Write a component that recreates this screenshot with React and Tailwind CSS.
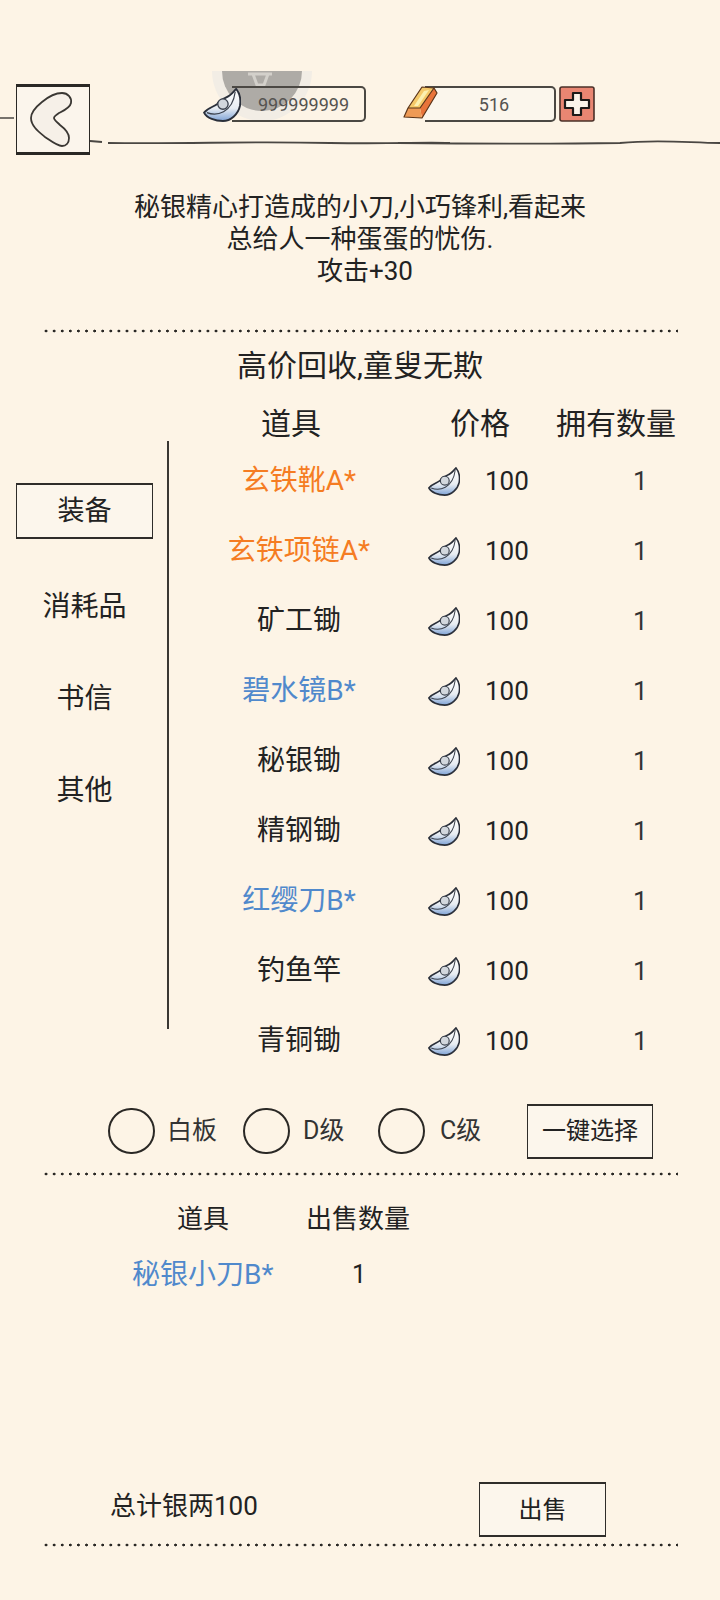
import React from "react";

const items = [
  { name: "玄铁靴A*", color: "text-[#f57c22]" },
  { name: "玄铁项链A*", color: "text-[#f57c22]" },
  { name: "矿工锄", color: "text-[#222222]" },
  { name: "碧水镜B*", color: "text-[#5089cc]" },
  { name: "秘银锄", color: "text-[#222222]" },
  { name: "精钢锄", color: "text-[#222222]" },
  { name: "红缨刀B*", color: "text-[#5089cc]" },
  { name: "钓鱼竿", color: "text-[#222222]" },
  { name: "青铜锄", color: "text-[#222222]" },
];

const tabs = ["装备", "消耗品", "书信", "其他"];
const grades = [
  { label: "白板", text: "w-[88px] pl-[12px]" },
  { label: "D级", text: "w-[88px] pl-[13px]" },
  { label: "C级", text: "w-[102px] pl-[15px]" },
];

// silver ingot used for the currency and price column
function SilverIcon({ className }) {
  return (
    <svg viewBox="0 0 40 36" className={className}>
      <defs>
        <linearGradient id="silver" x1="0" y1="0" x2="0" y2="1">
          <stop offset="0" stopColor="#ffffff" />
          <stop offset="0.6" stopColor="#e8edf3" />
          <stop offset="1" stopColor="#7fa3d6" />
        </linearGradient>
      </defs>
      <path d="M1 26 C5 21 11 20 15 17 C17 12 24 11 28 8 C31 6 33 3 35 1 C39 6 40 13 39 19 C37 28 29 35 21 35 C13 35 4 32 1 26 Z" fill="url(#silver)" stroke="#2a2f3a" strokeWidth="2" strokeLinejoin="round" />
      <circle cx="21" cy="17" r="5.5" fill="#d2d7dd" stroke="#3a404c" strokeWidth="1.4" />
      <path d="M4 26 C14 30 31 27 34 4" fill="none" stroke="#3a404c" strokeWidth="1.3" />
    </svg>
  );
}

function GoldIcon() {
  return (
    <svg viewBox="0 0 36 36" className="w-[36px] h-[36px] shrink-0">
      <path d="M32 2 L35 7 L20 32 L18 22 Z" fill="#e8743a" />
      <path d="M20 1 L32 2 L18 22 L6 22 Z" fill="#f5c96a" />
      <path d="M22 5 L27 4 L16 20 L12 20 Z" fill="#fbf0b0" />
      <path d="M6 22 L18 22 L20 32 L2 31 Z" fill="#ee9a55" />
      <path d="M20 1 L32 2 L35 7 L20 32 L2 31 L6 22 Z M6 22 H18 L32 2" fill="none" stroke="#5b3418" strokeWidth="1.2" strokeLinejoin="round" />
    </svg>
  );
}

function PlusIcon() {
  return (
    <svg viewBox="0 0 36 36" className="w-[36px] h-[36px] shrink-0 ml-[3px]">
      <rect x="1" y="1" width="34" height="34" rx="2" fill="#e98672" stroke="#4a3029" strokeWidth="1.6" />
      <path d="M14 7 H22 V14 H30 V22 H22 V29 H14 V22 H6 V14 H14 Z" fill="#fbf4ea" stroke="#1d1a18" strokeWidth="2.2" strokeLinejoin="round" />
    </svg>
  );
}

function BackButton() {
  return (
    <button className="w-[74px] h-[71px] shrink-0 bg-[#fbf5ec] border-x-[1.5px] border-y-[3px] border-[#2a2825] relative">
      <svg viewBox="0 0 74 71" className="absolute left-[-2px] top-[-3px] w-[74px] h-[71px]">
        <path d="M16 34 C16 28 22 22 27 18 C33 13 40 9 47 9 C53 9 57 14 56 19 C55 24 48 27 44 29 C41 31 39 33 39 34 C39 36 42 38 45 41 C49 44 54 48 54 54 C54 59 51 62 47 62 C42 62 36 57 30 53 C24 48 16 42 16 34 Z" fill="#f6f0e8" stroke="#3a3733" strokeWidth="1.8" />
      </svg>
    </button>
  );
}

function Dotted({ className }) {
  return <div className={"w-[636px] h-[4px] ml-[42px] bg-[radial-gradient(circle,#2a2825_1.2px,transparent_1.7px)] bg-[length:8.1px_4px] " + className} />;
}

function Box({ className, children }) {
  return (
    <button className={"flex items-center justify-center bg-[#fcf6ec] border-x-[1.5px] border-y-2 border-[#2f2d2a] text-[#222222] " + className}>
      {children}
    </button>
  );
}

export default function App() {
  return (
    <div className="w-[720px] h-[1600px] overflow-hidden bg-[#fdf4e6] text-[#222222] [font-family:Roboto,'Noto_Sans_CJK_SC',sans-serif]">
      {/* top bar */}
      <div className="relative h-[191px] pt-[84px] pl-[16px] flex items-start">
        <svg viewBox="0 0 720 70" className="absolute left-0 top-[101px] w-[720px] h-[70px]">
          <path d="M0 17 H14" stroke="#4a4743" strokeWidth="1.5" fill="none" />
          <path d="M90 40 L102 41 M108 42 C200 43 240 40 330 42 C400 43 420 41 450 42 M398 42 C500 43 560 43 620 42 C660 38 690 42 720 42" stroke="#4a4743" strokeWidth="1.8" fill="none" />
        </svg>
        <BackButton />

        <div className="relative ml-[113px] mt-[2px] w-[163px] h-[36px] flex items-center">
          <svg viewBox="0 0 100 55" className="absolute left-[9px] top-[-15px] w-[100px] h-[55px]">
            <circle cx="50" cy="0" r="50" fill="#f2ede5" />
            <circle cx="50" cy="0" r="40" fill="#aeaba6" />
            <path d="M36 3 H60 M41 3 L45 14 H52 L56 3" stroke="#d3d0ca" strokeWidth="3" fill="none" />
          </svg>
          <div className="absolute left-[29px] top-0 w-[134px] h-[36px] border-y-2 border-r-2 border-[#4b4843] rounded-r-[5px]" />
          <SilverIcon className="absolute left-0 top-[2px] w-[38px] h-[34px]" />
          <span className="absolute left-[55px] text-[18px] text-[#555350]">999999999</span>
        </div>

        <div className="relative ml-[36px] mt-[2px] w-[154px] h-[36px] flex items-center">
          <div className="absolute left-[23px] top-0 w-[131px] h-[36px] bg-[#fbf6ec] border-y-2 border-r-2 border-[#4b4843] rounded-r-[5px] flex items-center justify-center pl-[9px] text-[18px] text-[#555350]">
            516
          </div>
          <div className="relative">
            <GoldIcon />
          </div>
        </div>
        <div className="mt-[2px] ml-0">
          <PlusIcon />
        </div>
      </div>

      {/* item description */}
      <div className="h-[138px] text-center text-[26px] leading-[32px] text-[#222222]">
        <p>秘银精心打造成的小刀,小巧锋利,看起来</p>
        <p>总给人一种蛋蛋的忧伤.</p>
        <p className="pl-[10px]">攻击+30</p>
      </div>
      <Dotted className="" />

      <div className="h-[64px] flex items-center justify-center text-[30px]">高价回收,童叟无欺</div>

      <div className="h-[52px] flex items-center text-[30px] pl-[261px]">
        <span className="w-[60px]">道具</span>
        <span className="w-[60px] ml-[129px]">价格</span>
        <span className="w-[120px] ml-[46px]">拥有数量</span>
      </div>

      {/* shop list with category tabs */}
      <div className="flex h-[664px] mt-[-8px]">
        <div className="w-[167px] shrink-0 pt-[42px] pl-[16px] text-[28px]">
          {tabs.map((tab, i) =>
            i === 0 ? (
              <Box key={tab} className="w-[137px] h-[56px] mb-[30px] text-[27px]">
                {tab}
              </Box>
            ) : (
              <div key={tab} className="w-[137px] h-[75px] mb-[17px] flex items-center justify-center">
                {tab}
              </div>
            )
          )}
        </div>
        <div className="w-[2px] h-[588px] bg-[#3a3733] shrink-0" />
        <div className="flex-1 pt-[5px]">
          {items.map((item) => (
            <div key={item.name} className="h-[70px] flex items-center text-[28px]">
              <span className={"w-[260px] text-center shrink-0 " + item.color}>{item.name}</span>
              <SilverIcon className="w-[32px] h-[29px] ml-[-1px] shrink-0" />
              <span className="ml-[25px] w-[44px] text-[26px] leading-none">100</span>
              <span className="ml-[104px] text-[26px] leading-none text-[#333333]">1</span>
            </div>
          ))}
        </div>
      </div>

      {/* quick select by grade */}
      <div className="flex items-center h-[64px] mt-[-6px] pl-[108px]">
        {grades.map((g) => (
          <React.Fragment key={g.label}>
            <div className="w-[47px] h-[46px] rounded-full border-[2.5px] border-[#2a2825] shrink-0" />
            <span className={"text-[25px] text-[#333333] shrink-0 " + g.text}>{g.label}</span>
          </React.Fragment>
        ))}
        <Box className="w-[126px] h-[55px] text-[24px]">一键选择</Box>
      </div>

      <Dotted className="mt-[9px]" />

      <div className="flex items-center h-[46px] mt-[20px] text-[26px] pl-[177px]">
        <span className="w-[129px]">道具</span>
        <span>出售数量</span>
      </div>
      <div className="flex items-center h-[40px] mt-[13px] text-[28px] pl-[132px]">
        <span className="w-[220px] text-[#5089cc]">秘银小刀B*</span>
        <span className="text-[25px]">1</span>
      </div>

      {/* sale summary */}
      <div className="flex items-center h-[55px] mt-[187px] pl-[110px]">
        <span className="w-[369px] text-[26px] mt-[-6px]">总计银两100</span>
        <Box className="w-[127px] h-[55px] text-[24px]">出售</Box>
      </div>
      <Dotted className="mt-[6px]" />
    </div>
  );
}
